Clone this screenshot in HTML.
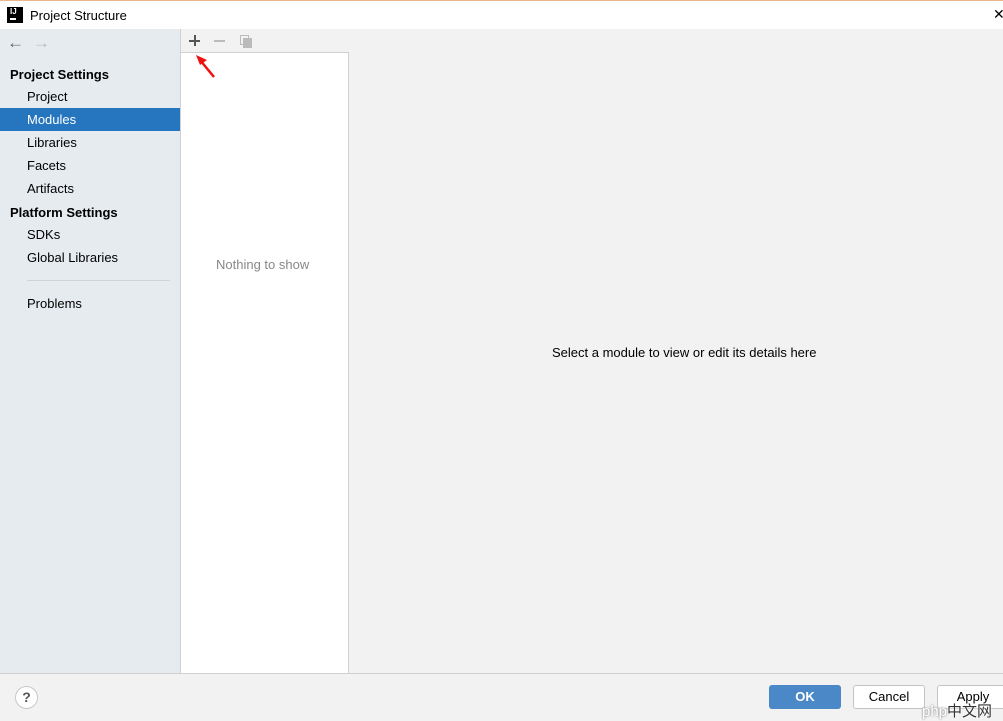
<!DOCTYPE html>
<html><head><style>
*{margin:0;padding:0;box-sizing:border-box}
body{width:1003px;height:720px;overflow:hidden;font-family:"Liberation Sans",sans-serif;font-size:13px;color:#000;background:#f2f2f2;position:relative}
.a{position:absolute}
.side div{position:absolute;left:0;width:180px;height:23px;line-height:23px}
</style></head><body>
<div class="a" style="left:0;top:0;width:1003px;height:1px;background:#e8b98a"></div>
<div class="a" style="left:0;top:1px;width:1003px;height:28px;background:#fff"></div>
<div class="a" style="left:7px;top:7px;width:16px;height:16px;background:#000;color:#fff;font-size:8px;font-weight:bold;line-height:9px;padding-left:3px">IJ<div style="position:absolute;left:3px;top:11px;width:6px;height:2px;background:#fff"></div></div>
<div class="a" style="left:30px;top:8px;font-size:13px">Project Structure</div>
<div class="a" style="left:993px;top:6px;font-size:14px">✕</div>
<div class="a side" style="left:0;top:29px;width:181px;height:644px;background:#e6ebf0;border-right:1px solid #d0d0d0">
<div style="left:7px;top:2px;color:#666;font-size:17px;width:auto">←</div>
<div style="left:33px;top:2px;color:#bbb;font-size:17px;width:auto">→</div>
<div style="top:34px;padding-left:10px;font-weight:bold">Project Settings</div>
<div style="top:56px;padding-left:27px">Project</div>
<div style="top:79px;padding-left:27px;background:#2675bf;color:#fff">Modules</div>
<div style="top:102px;padding-left:27px">Libraries</div>
<div style="top:125px;padding-left:27px">Facets</div>
<div style="top:148px;padding-left:27px">Artifacts</div>
<div style="top:172px;padding-left:10px;font-weight:bold">Platform Settings</div>
<div style="top:194px;padding-left:27px">SDKs</div>
<div style="top:217px;padding-left:27px">Global Libraries</div>
<div style="top:251px;left:27px;width:143px;height:1px;background:#cfd4d9"></div>
<div style="top:263px;padding-left:27px">Problems</div>
</div>
<div class="a" style="left:181px;top:29px;width:168px;height:24px;background:#f2f2f2;border-bottom:1px solid #d0d0d0"></div>
<div class="a" style="left:189px;top:40px;width:11px;height:2px;background:#555"></div>
<div class="a" style="left:194px;top:35px;width:2px;height:11px;background:#555"></div>
<div class="a" style="left:214px;top:40px;width:11px;height:2px;background:#bbb"></div>
<div class="a" style="left:240px;top:35px;width:9px;height:10px;border:1.5px solid #bbb"></div>
<div class="a" style="left:243px;top:38px;width:9px;height:10px;background:#bbb"></div>
<div class="a" style="left:181px;top:53px;width:168px;height:620px;background:#fff;border-right:1px solid #d0d0d0"></div>
<svg class="a" style="left:193px;top:52px" width="26" height="28"><line x1="21" y1="25" x2="7" y2="8" stroke="#f01010" stroke-width="2.5"/><polygon points="3,3 14,8 7,13" fill="#f01010"/></svg>
<div class="a" style="left:216px;top:257px;color:#888">Nothing to show</div>
<div class="a" style="left:552px;top:345px">Select a module to view or edit its details here</div>
<div class="a" style="left:0;top:673px;width:1003px;height:1px;background:#d0d0d0"></div>
<div class="a" style="left:15px;top:686px;width:23px;height:23px;border:1px solid #c8c8c8;border-radius:50%;background:#fff;text-align:center;line-height:21px;font-weight:bold;color:#555;font-size:14px">?</div>
<div class="a" style="left:769px;top:685px;width:72px;height:24px;background:#4a88c7;border-radius:3px;color:#fff;font-weight:bold;text-align:center;line-height:24px">OK</div>
<div class="a" style="left:853px;top:685px;width:72px;height:24px;background:#fff;border:1px solid #c4c4c4;border-radius:3px;text-align:center;line-height:22px">Cancel</div>
<div class="a" style="left:937px;top:685px;width:72px;height:24px;background:#fff;border:1px solid #c4c4c4;border-radius:3px;text-align:center;line-height:22px">Apply</div>
<div class="a" style="left:922px;top:700px;font-size:15px;color:#333;font-family:'Liberation Sans','Noto Sans CJK SC',sans-serif;text-shadow:0 0 2px #fff,0 0 2px #fff"><span style="color:#fff;text-shadow:0 0 2px #666">php</span>中文网</div>
</body></html>
